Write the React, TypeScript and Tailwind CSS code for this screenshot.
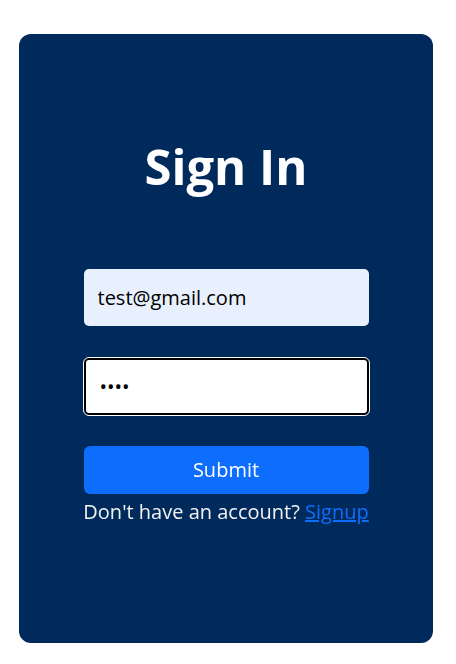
import * as React from "react";

export default function App() {
  return (
    <div className="min-h-screen bg-white pt-[34px] font-['Segoe_UI','Open_Sans',sans-serif]">
      <div className="ml-[19px] w-[414px] h-[609px] rounded-[12px] bg-[#002a5c] flex flex-col items-center">
        <h1 className="mt-[92px] text-[49px] leading-[80px] font-bold text-white">Sign In</h1>
        <form className="mt-[63px] w-[285px] flex flex-col items-center">
          <input
            type="email"
            defaultValue="test@gmail.com"
            className="h-[57px] w-full rounded-[5px] bg-[#e8f0fe] px-[14px] text-[20px] text-black outline-none"
          />
          <input
            type="password"
            defaultValue="test"
            autoFocus
            className="mt-[32px] h-[57px] w-full rounded-[5px] bg-white px-[14px] text-[20px] text-black border-2 border-black outline-1 outline-white"
          />
          <button
            type="button"
            className="mt-[31px] h-[48px] w-full rounded-[6px] bg-[#0d6efd] text-[20px] text-white"
          >
            Submit
          </button>
          <p className="mt-[4px] whitespace-nowrap text-center text-[20px] leading-[28px] text-[#f2f2f2]">
            Don't have an account?{" "}
            <a href="#" className="text-[#0d6efd] underline">
              Signup
            </a>
          </p>
        </form>
      </div>
    </div>
  );
}
